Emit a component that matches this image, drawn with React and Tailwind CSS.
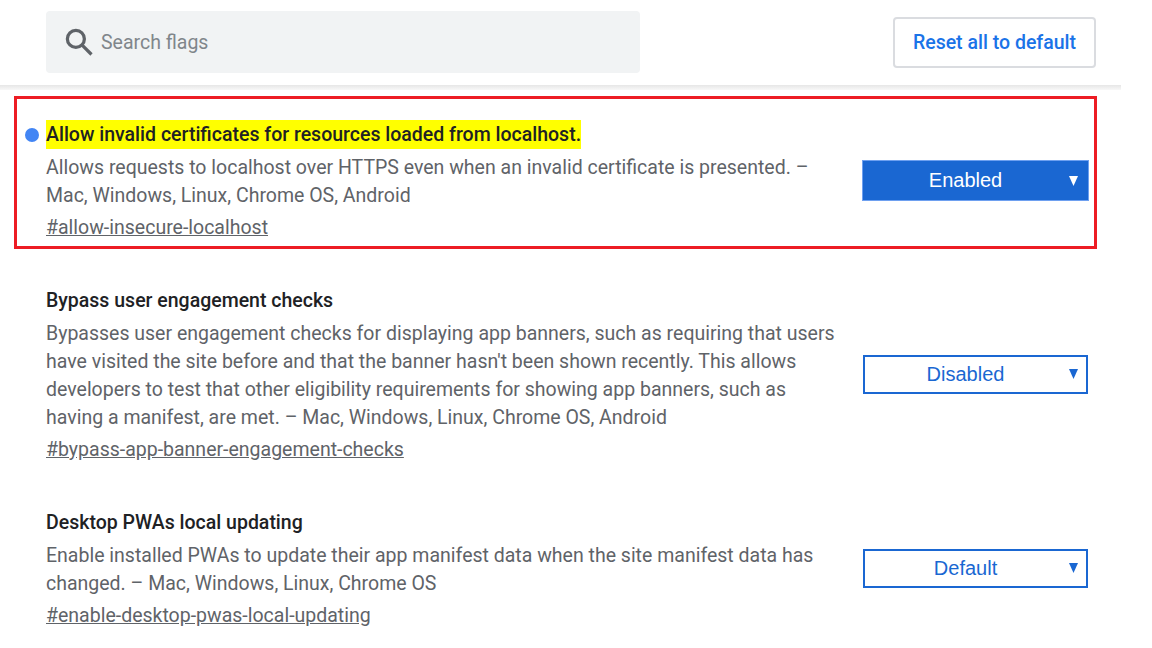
import React from 'react';

const roboto = "font-['Roboto',sans-serif]";

const flags = [
  {
    title: 'Allow invalid certificates for resources loaded from localhost.',
    lines: ['Allows requests to localhost over HTTPS even when an invalid certificate is presented. –', 'Mac, Windows, Linux, Chrome OS, Android'],
    link: '#allow-insecure-localhost',
    value: 'Enabled',
    active: true,
  },
  {
    title: 'Bypass user engagement checks',
    lines: [
      'Bypasses user engagement checks for displaying app banners, such as requiring that users',
      "have visited the site before and that the banner hasn't been shown recently. This allows",
      'developers to test that other eligibility requirements for showing app banners, such as',
      'having a manifest, are met. – Mac, Windows, Linux, Chrome OS, Android',
    ],
    link: '#bypass-app-banner-engagement-checks',
    value: 'Disabled',
  },
  {
    title: 'Desktop PWAs local updating',
    lines: ['Enable installed PWAs to update their app manifest data when the site manifest data has', 'changed. – Mac, Windows, Linux, Chrome OS'],
    link: '#enable-desktop-pwas-local-updating',
    value: 'Default',
  },
];

const FlagSelect = ({ value, active }) => (
  <div
    className={`relative mb-[2px] flex h-[39px] w-[225px] shrink-0 items-center justify-center border-2 border-[#1a67d2] pr-[20px] font-['Liberation_Sans',sans-serif] text-[20px] ${
      active ? 'bg-[#1a67d2] text-white outline-1 outline-[#6ea0f0]' : 'bg-white text-[#1a67d2]'
    }`}
  >
    {value}
    <svg className={`absolute right-[8px] h-[10px] w-[9px] ${active ? 'top-[13px]' : 'top-[12px]'}`} viewBox="0 0 9 10">
      <path d="M0 0h9L4.5 10z" fill={active ? '#ffffff' : '#1a67d2'} />
    </svg>
  </div>
);

const FlagRow = ({ flag }) => (
  <div
    className={`relative ml-[14px] flex w-[1083px] items-center justify-between border-[3px] pl-[29px] pr-[6px] ${
      flag.active ? 'mb-[-4px] border-[#ed1c24] pt-[21px] pb-[4px]' : 'border-transparent'
    }`}
  >
    {flag.active && <span className="absolute left-[8px] top-[29px] h-[14px] w-[14px] rounded-full bg-[#4285f4]" />}
    <div className="w-[800px]">
      <h2 className="h-[29px] text-[19.5px] font-medium leading-[29px] text-[#202124]">
        <span className={`inline-block ${flag.active ? 'bg-[#ffff00]' : ''}`}>{flag.title}</span>
      </h2>
      <p className="mt-[5px] text-[19.5px] leading-[28px] text-[#5f6368]">
        {flag.lines.map((line) => (
          <span key={line} className="block whitespace-nowrap">
            {line}
          </span>
        ))}
      </p>
      <a className="mt-1 block text-[19.5px] leading-[28px] text-[#5f6368] underline">{flag.link}</a>
    </div>
    <FlagSelect value={flag.value} active={flag.active} />
  </div>
);

export default function App() {
  return (
    <div className={`h-[648px] w-[1152px] overflow-hidden bg-white ${roboto}`}>
      <header className="flex h-[85px] w-[1121px] items-start justify-between pl-[46px] pr-[25px] pt-[11px]">
        <div className="flex h-[62px] w-[594px] items-center gap-[7px] rounded-[4px] bg-[#f1f3f4] pl-[18px]">
          <svg className="h-[30px] w-[30px]" viewBox="0 0 24 24" fill="none" stroke="#5f6368" strokeWidth="2.6">
            <circle cx="9.5" cy="9.5" r="6.8" />
            <path d="M14.5 14.5l7.5 7.5" />
          </svg>
          <span className="mt-[2px] text-[19.5px] text-[#80868b]">Search flags</span>
        </div>
        <button className="mt-[6px] h-[51px] w-[203px] rounded-[4px] border-2 border-[#dadce0] bg-white text-[19.5px] font-medium text-[#1a73e8]">
          Reset all to default
        </button>
      </header>
      <div className="h-[5px] w-[1121px] bg-gradient-to-b from-[#e6e6e6] to-[#f8f8f8]" />
      <main className="mt-[6px] flex flex-col gap-[38px]">
        {flags.map((flag) => (
          <FlagRow key={flag.link} flag={flag} />
        ))}
      </main>
    </div>
  );
}
